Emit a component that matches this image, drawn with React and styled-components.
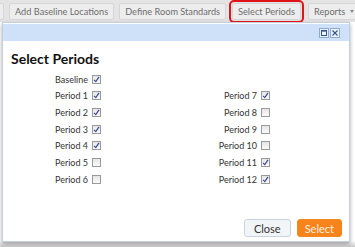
import React from "react";
import styled, { createGlobalStyle } from "styled-components";

const Global = createGlobalStyle`
  html, body { margin: 0; padding: 0; background: #ffffff; }
  body { font-family: Lato, "Open Sans", sans-serif; width: 355px; height: 247px; overflow: hidden; }
`;

const Page = styled.div`
  width: 355px;
  height: 247px;
  background: linear-gradient(#ffffff 0, #ffffff 241px, #c8c8c8 247px);
  overflow: hidden;
`;

const Toolbar = styled.div`
  height: 22px;
  background: #e4e4e4;
  display: flex;
  align-items: center;
  gap: 5px;
  overflow: hidden;
`;

const ToolButton = styled.div`
  height: 17px;
  box-sizing: border-box;
  padding: 0 5px;
  background: #ededed;
  border: 1px solid #d6d6d6;
  border-radius: 2px;
  color: #6e6e6e;
  font-size: 9.2px;
  white-space: nowrap;
  display: flex;
  align-items: center;
  gap: 5px;
  flex-shrink: 0;
  ${(p) => p.$active && `outline: 2px solid #e0141b; outline-offset: 1px; margin: 0 2px 0 1px;`}
  ${(p) => p.$stub && `margin-left: -20px; width: 24px;`}
`;

const Caret = styled.span`
  width: 0;
  height: 0;
  border-left: 2.5px solid transparent;
  border-right: 2.5px solid transparent;
  border-top: 3px solid #888;
`;

const Dialog = styled.div`
  margin: 0 5px 0 2px;
  height: 220px;
  box-sizing: border-box;
  border: 1px solid #c3cfde;
  background: #fff;
  display: flex;
  flex-direction: column;
  box-shadow: 0 2px 4px rgba(0, 0, 0, 0.35);
`;

const TitleBar = styled.div`
  height: 17px;
  margin-top: 1px;
  background: #cfe1f8;
  display: flex;
  align-items: center;
  justify-content: flex-end;
  gap: 1px;
  padding-right: 9px;
`;

const TitleIcon = styled.div`
  width: 8px;
  height: 8px;
  border: 1px solid #8eaad3;
  background: #eaf2fc;
  display: flex;
  align-items: center;
  justify-content: center;
`;

const Body = styled.div`
  flex: 1;
  display: flex;
  flex-direction: column;
  padding: 0 7px 0 8px;
`;

const Heading = styled.h2`
  margin: 9px 0 0 0;
  font-size: 14px;
  font-weight: 700;
  color: #111;
  line-height: 18px;
`;

const Grid = styled.div`
  display: grid;
  grid-template-columns: 90px 169px;
  grid-template-rows: repeat(7, 16.67px);
  margin-top: 3px;
`;

const Cell = styled.label`
  display: flex;
  align-items: center;
  justify-content: flex-end;
  gap: 4px;
  font-size: 9px;
  color: #333;
  grid-column: ${(p) => p.$col};
  grid-row: ${(p) => p.$row};
`;

const Box = styled.span`
  width: 9px;
  height: 9px;
  box-sizing: border-box;
  border: 1px solid #9a9a9a;
  background: linear-gradient(#e6e6e6, #fafafa);
  display: flex;
  align-items: center;
  justify-content: center;
`;

const Footer = styled.div`
  margin-top: auto;
  display: flex;
  justify-content: flex-end;
  gap: 6px;
  padding: 0 0 4px 0;
`;

const Btn = styled.button`
  height: 18px;
  padding: 0 ${(p) => (p.$primary ? 7 : 9)}px;
  font-family: Lato, sans-serif;
  font-size: 11px;
  border-radius: 3px;
  border: 1px solid ${(p) => (p.$primary ? "#f08a1e" : "#c9d3df")};
  background: ${(p) => (p.$primary ? "#f7841a" : "#f2f5f8")};
  color: ${(p) => (p.$primary ? "#fff1e2" : "#333")};
  display: flex;
  align-items: center;
`;

const Check = () => (
  <svg width="7" height="7" viewBox="0 0 7 7">
    <path d="M1 3.8 L2.8 5.6 L6 0.8" fill="none" stroke="#3b4a9a" strokeWidth="1.2" />
  </svg>
);

const items = [
  ["Baseline", true, 1, 1],
  ["Period 1", true, 1, 2],
  ["Period 2", true, 1, 3],
  ["Period 3", true, 1, 4],
  ["Period 4", true, 1, 5],
  ["Period 5", false, 1, 6],
  ["Period 6", false, 1, 7],
  ["Period 7", true, 2, 2],
  ["Period 8", false, 2, 3],
  ["Period 9", false, 2, 4],
  ["Period 10", false, 2, 5],
  ["Period 11", true, 2, 6],
  ["Period 12", true, 2, 7],
];

export default function App() {
  return (
    <Page>
      <Global />
      <Toolbar>
        <ToolButton $stub>&nbsp;</ToolButton>
        <ToolButton>Add Baseline Locations</ToolButton>
        <ToolButton>Define Room Standards</ToolButton>
        <ToolButton $active>Select Periods</ToolButton>
        <ToolButton>
          Reports <Caret />
        </ToolButton>
      </Toolbar>
      <Dialog>
        <TitleBar>
          <TitleIcon>
            <svg width="6" height="6" viewBox="0 0 6 6">
              <rect x="0.5" y="0.5" width="5" height="5" fill="none" stroke="#35518a" strokeWidth="1" />
              <line x1="0" y1="1" x2="6" y2="1" stroke="#35518a" strokeWidth="1.2" />
            </svg>
          </TitleIcon>
          <TitleIcon>
            <svg width="6" height="6" viewBox="0 0 6 6">
              <path d="M0.5 0.5 L5.5 5.5 M5.5 0.5 L0.5 5.5" stroke="#35518a" strokeWidth="1.1" />
            </svg>
          </TitleIcon>
        </TitleBar>
        <Body>
          <Heading>Select Periods</Heading>
          <Grid>
            {items.map(([label, checked, col, row]) => (
              <Cell key={label} $col={col} $row={row}>
                {label}
                <Box>{checked && <Check />}</Box>
              </Cell>
            ))}
          </Grid>
          <Footer>
            <Btn>Close</Btn>
            <Btn $primary>Select</Btn>
          </Footer>
        </Body>
      </Dialog>
    </Page>
  );
}
